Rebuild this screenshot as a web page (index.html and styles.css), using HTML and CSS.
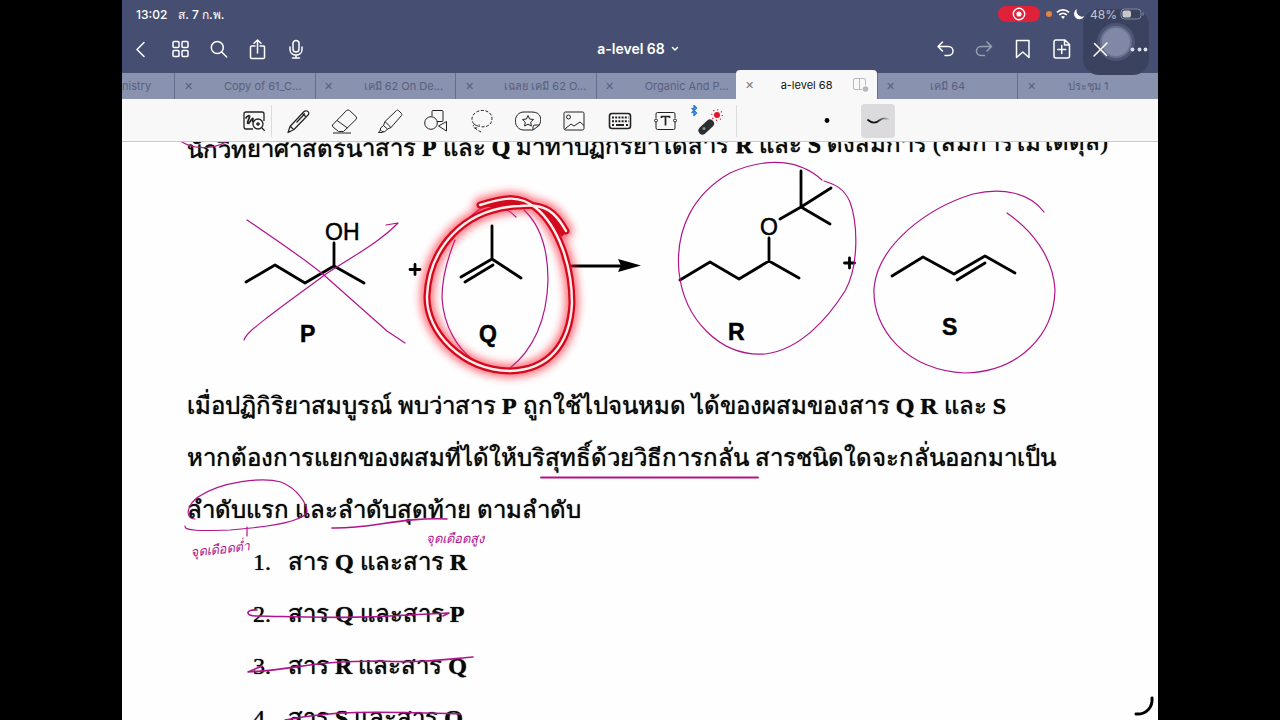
FILE: index.html
```html
<!DOCTYPE html>
<html lang="th">
<head>
    <meta charset="UTF-8">
    <meta name="viewport" content="width=device-width, initial-scale=1.0">
    <title>a-level 68</title>
    <link rel="stylesheet" href="styles.css">
</head>
<body>
    <div class="app">
        <header class="header">
            <div class="assist"><span></span></div>
            <div class="status">
                <span>13:02</span>
                <span class="date">ส. 7 ก.พ.</span>
                <div class="status-right">
                    <span class="record">
                        <svg width="14" height="14" viewBox="0 0 14 14"><circle cx="7" cy="7" r="5.7" fill="none" stroke="#fff" stroke-width="1.4"/><circle cx="7" cy="7" r="2.6" fill="#fff"/></svg>
                    </span>
                    <span class="mic-dot"></span>
                    <svg width="14" height="12" viewBox="0 0 14 12" fill="none" stroke="#fff" stroke-width="1.7"><path d="M1 4.4C4.4 1 9.6 1 13 4.4M3.2 6.8c2.2-2.1 5.4-2.1 7.6 0"/><path d="M5 8.8c1.2-1 2.8-1 4 0L7 11z" fill="#fff" stroke="none"/></svg>
                    <svg class="moon" width="12" height="12" viewBox="0 0 12 12"><path d="M4 1A5.4 5.4 0 1 0 11.3 8.2 5.6 5.6 0 0 1 4 1z" fill="#fff"/></svg>
                    <span class="percent">48%</span>
                    <svg width="24" height="12" viewBox="0 0 24 12"><rect x="1" y="1" width="20" height="10" rx="3.5" fill="none" stroke="#8188a0"/><rect x="2.5" y="2.5" width="8.500" height="7" rx="2" fill="#c8c8cc"/><path d="M22.500 4v4c1.600-.6 1.600-3.400 0-4z" fill="#8188a0"/></svg>
                </div>
            </div>
            <nav class="nav">
                <div class="nav-group">
                    <button aria-label="Back"><svg width="24" height="24" viewBox="0 0 24 24"><path d="M14 5.500 7 12.500l7 7"/></svg></button>
                    <button aria-label="Pages"><svg width="24" height="24" viewBox="0 0 24 24"><rect x="4" y="4.500" width="6" height="6" rx="1"/><rect x="13" y="4.500" width="6" height="6" rx="1"/><rect x="4" y="13.500" width="6" height="6" rx="1"/><rect x="13" y="13.500" width="6" height="6" rx="1"/></svg></button>
                    <button aria-label="Search"><svg width="24" height="24" viewBox="0 0 24 24"><circle cx="9.300" cy="10.500" r="6"/><path d="m13.700 15 5 5"/></svg></button>
                    <button aria-label="Share"><svg width="24" height="24" viewBox="0 0 24 24"><path d="M8 9H4.500Q3.500 9 3.500 10v10.500q0 1 1 1h12q1 0 1-1V10q0-1-1-1H13M10.500 16V3M7 6.300 10.500 3 14 6.300"/></svg></button>
                    <button aria-label="Record"><svg width="24" height="24" viewBox="0 0 24 24"><rect x="7" y="3.500" width="6" height="11.500" rx="3"/><path d="M4 10v2.500c0 7.300 12 7.300 12 0V10M10 18v3M6.500 21h7"/></svg></button>
                </div>
                <button class="title">a-level 68 <svg width="8" height="6" viewBox="0 0 8 6"><path d="m1.500 1.500 2.500 2.500 2.500-2.500"/></svg></button>
                <div class="nav-group nav-right">
                    <button aria-label="Undo"><svg width="24" height="24" viewBox="0 0 24 24"><path d="M10.500 5 6 9.500l4.500 4.500M6 9.500h10.500c6 0 6 9 0 9H13"/></svg></button>
                    <button aria-label="Redo" class="faded"><svg width="24" height="24" viewBox="0 0 24 24"><path d="m16 5 4.500 4.500L16 14M20.500 9.500H10c-6 0-6 9 0 9h3.500"/></svg></button>
                    <button aria-label="Bookmark"><svg width="24" height="24" viewBox="0 0 24 24"><path d="M6.500 3.500H19v17L12.800 15 6.500 20.500z"/></svg></button>
                    <button aria-label="Add page"><svg width="24" height="24" viewBox="0 0 24 24"><path d="M7 3h9l4.500 4.500v11.500q0 2-2 2H7q-2 0-2-2V5q0-2 2-2zM15.500 3v5h5M12.700 8.500v8M8.700 12.500h8"/></svg></button>
                    <button aria-label="Pen mode"><svg width="24" height="24" viewBox="0 0 24 24"><path d="m6.500 6.500 12 12M6 19 19 6"/></svg></button>
                    <button aria-label="More"><svg width="24" height="24" viewBox="0 0 24 24"><g fill="#dde0ea" stroke="none"><circle cx="5.500" cy="12.500" r="1.900"/><circle cx="12.500" cy="12.500" r="1.900"/><circle cx="18.500" cy="12.500" r="1.900"/></g></svg></button>
                </div>
            </nav>
        </header>

        <div class="tabs">
            <div class="tab cut"><span>nistry</span></div>
            <div class="tab"><button class="close" aria-label="Close tab">✕</button><span class="name long">Copy of 61_C...</span></div>
            <div class="tab"><button class="close" aria-label="Close tab">✕</button><span class="name long">เคมี 62 On De...</span></div>
            <div class="tab"><button class="close" aria-label="Close tab">✕</button><span class="name long">เฉลย เคมี 62 O...</span></div>
            <div class="tab"><button class="close" aria-label="Close tab">✕</button><span class="name long">Organic And P...</span></div>
            <div class="tab active"><button class="close" aria-label="Close tab">✕</button><span class="name">a-level 68</span>
                <svg width="18" height="16" viewBox="0 0 18 16" fill="none" stroke="#b9b9bb"><path d="M10 12.500H3q-1.500 0-1.500-1.500V3Q1.500 1.500 3 1.500h9Q13.500 1.500 13.500 3v5M7.500 1.500v11"/><circle cx="13.500" cy="12" r="2.800" fill="#b9b9bb" stroke="none"/></svg>
            </div>
            <div class="tab"><button class="close" aria-label="Close tab">✕</button><span class="name">เคมี 64</span></div>
            <div class="tab"><button class="close" aria-label="Close tab">✕</button><span class="name">ประชุม 1</span></div>
        </div>

        <div class="toolbar">
            <button class="zoom" aria-label="Zoom window"><svg width="24" height="24" viewBox="0 0 24 24" stroke-width="1.300"><path d="M11 20H4q-2 0-2-2V5q0-2 2-2h16q2 0 2 2v7"/><path d="M3.500 9.500c2-3 4.500-4 4-1.500S4.500 14 6 14.500 9 10 10.500 9.500s-1 4 1 3" stroke-width="1.700"/><circle cx="16" cy="15" r="5"/><path d="m19.700 18.700 3 3M16 13v4M14 15h4"/></svg></button>
            <span class="divider"></span>
            <div class="tools">
                <button aria-label="Pen"><svg width="26" height="26" viewBox="0 0 26 26" stroke-width="1.200"><path d="M3 24.500 5 18.500 18.500 4q1.500-1.500 3.500-1 2.500 1 1.500 3.500L9 21.500zM3 24.500l3-1.200M5.500 18.500l3 3M17.500 5.500l3.500 3.500M11.500 14.500l8.500-9"/></svg></button>
                <button aria-label="Eraser"><svg width="26" height="26" viewBox="0 0 26 26"><path d="M1.500 17 15.500 2.500q1.500-1.300 3 0L25 8.500q1.200 1.500 0 3L12.500 23.500H7.500L1.500 18.500zM6 12.500l10.500 7.500M2 25h18"/></svg></button>
                <button aria-label="Highlighter"><svg width="26" height="26" viewBox="0 0 26 26"><path d="m8 13.500 11.500-11q1-1 2 0l3 3q1 1 0 2L14 19.500zM8 13.500l-1.500 4 4 3.500 3.500-1.500M6.500 17.500 3.500 20v2l1.500 1.500 2.500.5 3-3M3.500 22l-2 2.500h4l1-.8"/></svg></button>
                <button aria-label="Shapes"><svg width="26" height="26" viewBox="0 0 26 26"><path d="M9 8V3.500q0-1 1-1h9q1 0 1 1v9q0 1-1 1h-5"/><circle cx="8" cy="15" r="6.300"/><path d="M23.500 13.500 15.500 18l8 5z"/></svg></button>
                <button aria-label="Lasso"><svg width="26" height="26" viewBox="0 0 26 26"><path stroke-dasharray="3 1.600" d="M9 18C1 16 1 7 8.500 3.500 15 .5 23 4 23 10.500S17 20 10.500 18.500M6 16c-3 1.500-2 4.500 1 4s4-3 3-3.500M6 20c2 2 3 2.500 6 4"/></svg></button>
                <button aria-label="Stickers"><svg width="26" height="26" viewBox="0 0 26 26"><path d="M18 22H9C-2.500 22-2.500 4 9 4h8c10 0 10 9 7 13.500L18 22v-3q0-2 2-2h4.500"/><path d="m13 7.500 1.600 3.500 3.900.5-2.800 2.700.7 3.800L13 16.200 9.600 18l.7-3.800-2.800-2.700 3.900-.5z"/></svg></button>
                <button aria-label="Image"><svg width="26" height="26" viewBox="0 0 26 26"><rect x="3" y="4" width="20" height="18" rx="1.500"/><circle cx="7.500" cy="9" r="2"/><path d="m4 21 6-5 3 2 6-4 4 3.500"/></svg></button>
                <button aria-label="Keyboard"><svg width="26" height="26" viewBox="0 0 26 26"><rect x="2.500" y="5.500" width="21" height="15" rx="2.500" stroke-width="1.600"/><path stroke-width="2" stroke-dasharray="2 1.200" d="M5 9.500h16.500M5 13.200h16.500"/><path d="M5 17h2m2 0h8m2 0h2" stroke-width="2"/></svg></button>
                <button aria-label="Text"><svg width="26" height="26" viewBox="0 0 26 26"><path d="M3 10V6q0-1.500 1.500-1.500h16q1.500 0 1.500 1.500v4M3 14v6q0 1.500 1.500 1.500h16q1.500 0 1.500-1.500v-6"/><circle cx="3" cy="12.500" r="1.500"/><circle cx="22" cy="12.500" r="1.500"/><path d="M8.500 10V8.500h8V10M12.500 8.500v9" stroke-width="1.700"/></svg></button>
                <button aria-label="Laser pointer"><svg width="44" height="32" viewBox="0 0 44 32"><path d="m1.500 3 5 5L4 10.500V.500L6.500 3l-5 5" stroke="#2277d4" stroke-width="1.400"/><path d="M12.500 25.500 20 18.500" stroke="#2b2f30" stroke-width="8" stroke-linecap="round"/><circle cx="14" cy="23.500" r="1.500" fill="#8b9294" stroke="none"/><circle cx="27" cy="10" r="3" fill="#e2142b" stroke="none"/><circle cx="27" cy="10" r="5.300" stroke="#e2142b" stroke-width="1.400" stroke-dasharray="1 3.100"/></svg></button>
            </div>
            <span class="divider"></span>
            <div class="styles">
                <button aria-label="Dot"><svg width="26" height="26" viewBox="0 0 26 26"><circle cx="13" cy="12.500" r="2.400" fill="#000" stroke="none"/></svg></button>
                <button aria-label="Stroke" class="selected"><svg width="26" height="26" viewBox="0 0 26 26"><defs><linearGradient id="fade"><stop offset=".4" stop-color="#111"/><stop offset="1" stop-color="#bbb"/></linearGradient></defs><path stroke="url(#fade)" stroke-width="1.800" stroke-linecap="round" d="M3 12c4 3.500 8 3.500 12 0 2-1.700 5-2 8-1"/></svg></button>
            </div>
        </div>

        <main class="page">
            <div class="sheet">
                <p class="tilted">นักวิทยาศาสตร์นำสาร <b>P</b> และ <b>Q</b> มาทำปฏิกิริยาได้สาร <b>R</b> และ <b>S</b> ดังสมการ (สมการไม่ได้ดุล)</p>
                <svg class="equation" width="840" height="204" viewBox="187 176 840 204">
                    <g class="bond">
                        <path d="m246 282 29-17 30 18 29-17 30 17M334 243v23"/>
                        <path d="M492 226v33l29 19M492 259l-31 18M493 265l-28 17"/>
                        <path d="M572 266h54"/>
                        <path d="m680 280 30-18 29 17 30-18 30 17M769 238v23M780 219l21-12V171M801 207l30-19M801 207l29 17"/>
                        <path d="m892 276 31-19 31 17 31-18 30 17M957 280l28-17"/>
                        <path d="M410 269.500h10M415 264.500v10M844.500 263h10M849.500 258v10"/>
                    </g>
                    <path d="m618 259 23 6.500-23 6.500 3-6.500z"/>
                    <text x="325" y="240">OH</text>
                    <text x="760" y="235">O</text>
                    <g class="label">
                        <text x="300" y="342">P</text>
                        <text x="479" y="342">Q</text>
                        <text x="728" y="340">R</text>
                        <text x="942" y="335">S</text>
                    </g>
                </svg>
                <p>เมื่อปฏิกิริยาสมบูรณ์ พบว่าสาร <b>P</b> ถูกใช้ไปจนหมด ได้ของผสมของสาร <b>Q R</b> และ <b>S</b></p>
                <p>หากต้องการแยกของผสมที่ได้ให้บริสุทธิ์ด้วยวิธีการกลั่น สารชนิดใดจะกลั่นออกมาเป็น</p>
                <p>ลำดับแรก และลำดับสุดท้าย ตามลำดับ</p>
                <ul class="choices">
                    <li><span>1.</span>สาร <b>Q</b> และสาร <b>R</b></li>
                    <li><span>2.</span>สาร <b>Q</b> และสาร <b>P</b></li>
                    <li><span>3.</span>สาร <b>R</b> และสาร <b>Q</b></li>
                    <li><span>4.</span>สาร <b>S</b> และสาร <b>Q</b></li>
                </ul>
            </div>

            <!-- handwritten notes -->
            <svg class="ink" width="1036" height="578" viewBox="122 142 1036 578">
                <defs><filter id="glow" x="-20%" y="-20%" width="140%" height="140%"><feGaussianBlur stdDeviation="4"/></filter></defs>
                <path d="M182 142C195 150 213 149 226 142"/>
                <path d="M247 220C290 249 310 263 325 276L387 331 405 343M244 340C246 334 254 328 268 317 290 300 306 289 326 274 350 258 380 242 398 223L386 225"/>
                <path d="M455 240C446 262 442 280 442 298 444 328 458 348 472 359M470 217C485 202 500 201 516 217M524 210C541 226 548 252 548 280 547 320 533 350 510 368"/>
                <path d="M822 180C800 160 768 156 730 173 693 194 675 230 679 272 684 319 720 357 765 354 800 350 828 318 845 291 859 266 858 224 850 202 844 188 834 184 824 181"/>
                <path d="M1044 212C1030 193 1003 187 973 194 927 208 878 245 874 288 872 330 907 370 965 373 1019 372 1054 335 1055 290 1053 255 1030 229 1007 213"/>
                <path d="M541 477.500H758" stroke-width="1.800"/>
                <path d="M195 519C185 519 186 506 198 497 222 481 263 477 281 482 298 489 307 504 307 512 303 522 268 527 230 530 200 531 184 531 185 526M247 527V536"/>
                <path d="M332 528C370 529 400 517 447 519" stroke-width="1.600"/>
                <path d="M257 610C245 609 245 616 256 616 310 617 350 619 408 615L449 613 443 616" stroke-width="1.600"/>
                <path d="M262 666 248 672C300 669 310 661 380 661 420 663 440 660 473 657" stroke-width="1.600"/>
                <path d="M285 720C330 711 370 711 460 714" stroke-width="1.600"/>
                <text x="191" y="557" transform="rotate(-7 191 557)">จุดเดือดต่ำ</text>
                <text x="426" y="543">จุดเดือดสูง</text>
                <g class="laser">
                    <path class="halo" filter="url(#glow)" d="M480 205C505 197 520 195 536 208 558 226 572 265 572 303 570 345 548 370 510 371 462 370 426 332 427 296 429 250 462 208 520 206 546 203 556 213 566 231"/>
                    <path class="edge" d="M480 205C505 197 520 195 536 208 558 226 572 265 572 303 570 345 548 370 510 371 462 370 426 332 427 296 429 250 462 208 520 206 546 203 556 213 566 231"/>
                    <path class="fill" d="M480 205C505 197 520 195 536 208 506 205 485 208 480 205M540 206 562 236 566 231C558 217 552 206 540 206"/>
                    <path class="core" d="M480 205C505 197 520 195 536 208 558 226 572 265 572 303 570 345 548 370 510 371 462 370 426 332 427 296 429 250 462 208 520 206 546 203 556 213 566 231"/>
                </g>
                <path class="corner" d="M1152 698C1153 707 1146 715 1136 714"/>
            </svg>
        </main>
    </div>
</body>
</html>
```
FILE: styles.css
```css
* {
    box-sizing: border-box;
}
body {
    margin: 0;
    background: #000;
    font-family: Inter, "Liberation Sans", sans-serif;
}
button {
    padding: 0;
    border: none;
    background: none;
    color: inherit;
    font: inherit;
    cursor: pointer;
}
svg {
    display: block;
}
.app {
    height: 100vh;
    margin: 0 122px;
    display: flex;
    flex-direction: column;
    overflow: hidden;
    background: #fff;
}

/* header */
.header {
    position: relative;
    z-index: 1;
    background: #464f72;
    color: #fff;
}
.status {
    position: relative;
    display: flex;
    align-items: center;
    height: 28px;
    padding: 0 14px;
    font-size: 12px;
    font-weight: 500;
}
.date {
    margin-left: 11px;
}
.status-right {
    display: flex;
    align-items: center;
    gap: 3px;
    margin-left: auto;
}
.record {
    display: flex;
    justify-content: center;
    width: 42px;
    padding: 1px 0;
    border-radius: 8px;
    background: #e0213a;
}
.mic-dot {
    width: 6px;
    height: 6px;
    margin: 0 1px 0 3px;
    border-radius: 50%;
    background: #e8833a;
}
.moon {
    margin-right: 2px;
}
.percent {
    color: #c3c6d2;
    font-weight: 400;
}
.nav {
    position: relative;
    display: grid;
    grid-template-columns: 1fr auto 1fr;
    height: 45px;
    padding-bottom: 4px;
}
.nav-group {
    display: flex;
}
.nav-right {
    justify-content: flex-end;
}
.nav-group button {
    display: flex;
    align-items: center;
    justify-content: center;
    width: 39px;
}
.nav svg {
    fill: none;
    stroke: #fff;
    stroke-width: 1.5;
    stroke-linecap: round;
    stroke-linejoin: round;
}
.nav .faded {
    opacity: 0.45;
}
.title {
    display: flex;
    align-items: center;
    gap: 6px;
    padding-right: 4px;
    font-size: 14px;
    font-weight: 600;
}
.assist {
    position: absolute;
    top: 9px;
    right: 9px;
    width: 66px;
    height: 66px;
    padding: 17px;
    border-radius: 16px;
    background: #3b4260;
}
.assist span {
    display: block;
    width: 32px;
    height: 32px;
    border: 2px solid #69718f;
    border-radius: 50%;
    background: #8088a5;
    box-shadow: 0 0 0 3px #4d5575;
}

/* tabs */
.tabs {
    display: grid;
    grid-template-columns: 52px repeat(7, 1fr);
    height: 26px;
    background: #8992ae;
    color: #596080;
    font-size: 11px;
}
.tab {
    display: grid;
    grid-template-columns: 32px 1fr 32px;
    align-items: center;
    border-left: 1px solid #656e8e;
    white-space: nowrap;
}
.tab.cut {
    display: flex;
    border: none;
    overflow: hidden;
}
.tab .name {
    text-align: center;
}
.tab .long {
    grid-column: 2 / 4;
    padding: 0 12px 0 16px;
}
.close {
    width: 26px;
    font-size: 11px;
}
.tab.active {
    margin-top: -3px;
    border: none;
    border-radius: 4px 4px 0 0;
    background: #f8f8f9;
    color: #111;
    z-index: 2;
}
.tab.active .close {
    color: #777;
}
.tab.active svg {
    justify-self: center;
}

/* toolbar */
.toolbar {
    display: flex;
    align-items: center;
    height: 43px;
    padding: 1px 0 0 115px;
    border-bottom: 1px solid #c9c9cb;
    background: #f8f8f9;
}
.toolbar button {
    display: flex;
    align-items: center;
    justify-content: center;
    width: 46px;
    height: 34px;
}
.toolbar svg {
    fill: none;
    stroke: #222;
    stroke-linejoin: round;
}
.toolbar .zoom {
    width: 34px;
}
.divider {
    width: 1px;
    height: 32px;
    background: #dcdcde;
}
.tools {
    display: flex;
    margin: 0 1px 0 3px;
}
.styles {
    display: flex;
    gap: 17px;
    margin-left: 73px;
}
.toolbar .styles button {
    width: 34px;
    border-radius: 4px;
}
.toolbar .selected {
    background: #dbdbdd;
}

/* document */
.page {
    position: relative;
    flex: 1;
    overflow: hidden;
    background: #fefefe;
}
.sheet {
    margin-top: -18px;
    padding-left: 65px;
    color: #0a0a0a;
    font-family: "Liberation Serif", serif;
    font-size: 24px;
    line-height: 52px;
    text-shadow: 0 0 1px #0a0a0a;
    white-space: nowrap;
}
.sheet p {
    height: 52px;
    margin: 0;
}
.tilted {
    transform: rotate(-0.5deg);
    transform-origin: left;
}
.equation {
    overflow: visible;
    font: 23px "Liberation Sans", sans-serif;
    text-shadow: none;
}
.equation text {
    stroke: #000;
    stroke-width: 0.5;
}
.equation .label {
    font-weight: bold;
}
.bond {
    fill: none;
    stroke: #000;
    stroke-width: 2.8;
    stroke-linecap: round;
    stroke-linejoin: round;
}
.choices {
    margin: 0;
    padding-left: 66px;
    list-style: none;
}
.choices li {
    height: 52px;
}
.choices span {
    display: inline-block;
    width: 35px;
}
.ink {
    position: absolute;
    top: 0;
    left: 0;
    fill: none;
    stroke: #b0148c;
    stroke-width: 1.2;
    stroke-linecap: round;
    stroke-linejoin: round;
    pointer-events: none;
}
.ink text {
    fill: #b0148c;
    stroke: none;
    font: italic 13px "Liberation Sans", sans-serif;
}
.laser .halo {
    stroke: #ff2a3c;
    stroke-width: 13;
    opacity: 0.7;
}
.laser .edge {
    stroke: #d30a1e;
    stroke-width: 7;
}
.laser .fill {
    fill: #d30a1e;
    stroke: #d30a1e;
}
.laser .core {
    stroke: #fff0ee;
    stroke-width: 2.4;
}
.ink .corner {
    stroke: #000;
    stroke-width: 3;
}
```
